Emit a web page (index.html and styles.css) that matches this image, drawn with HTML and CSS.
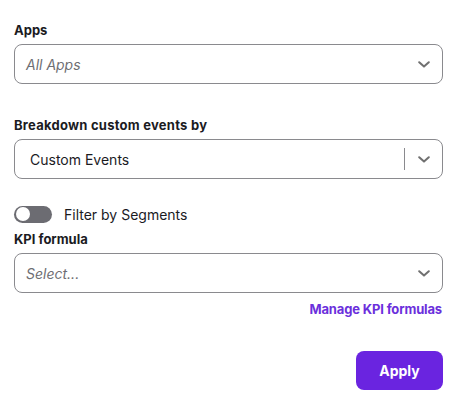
FILE: index.html
```html
<!DOCTYPE html>
<html lang="en">
<head>
<meta charset="utf-8">
<title>Filters</title>
<link rel="stylesheet" href="styles.css">
</head>
<body>
<div class="panel">
  <div class="field field-apps">
    <div class="label">Apps</div>
    <div class="select">
      <span class="placeholder">All Apps</span>
      <svg class="chev" width="12" height="7" viewBox="0 0 12 7"><path d="M1.2 1.2 L6 5.6 L10.8 1.2" fill="none" stroke="#707070" stroke-width="2" stroke-linecap="round" stroke-linejoin="round"/></svg>
    </div>
  </div>

  <div class="field field-breakdown">
    <div class="label label-wide">Breakdown custom events by</div>
    <div class="select select-value">
      <span class="value">Custom Events</span>
      <span class="sep"></span>
      <svg class="chev" width="12" height="7" viewBox="0 0 12 7"><path d="M1.2 1.2 L6 5.6 L10.8 1.2" fill="none" stroke="#707070" stroke-width="2" stroke-linecap="round" stroke-linejoin="round"/></svg>
    </div>
  </div>

  <div class="toggle-row">
    <span class="toggle"><span class="knob"></span></span>
    <span class="toggle-text">Filter by Segments</span>
  </div>

  <div class="field field-kpi">
    <div class="label">KPI formula</div>
    <div class="select">
      <span class="placeholder">Select...</span>
      <svg class="chev" width="12" height="7" viewBox="0 0 12 7"><path d="M1.2 1.2 L6 5.6 L10.8 1.2" fill="none" stroke="#707070" stroke-width="2" stroke-linecap="round" stroke-linejoin="round"/></svg>
    </div>
  </div>

  <div class="link-row"><a class="manage" href="#">Manage KPI formulas</a></div>

  <div class="actions"><button class="apply">Apply</button></div>
</div>
</body>
</html>
```

FILE: styles.css
```css
html, body {
  margin: 0;
  padding: 0;
  background: #ffffff;
}
body {
  font-family: Inter, "Noto Sans", "Liberation Sans", sans-serif;
  color: #1b1b1f;
}
.panel {
  padding: 22px 13px 0 14px;
  display: flex;
  flex-direction: column;
}
.field {
  display: flex;
  flex-direction: column;
  gap: 6px;
}
.label {
  font-size: 13px;
  line-height: 16px;
  font-weight: 700;
  color: #1b1b1f;
}
.label-wide {
  letter-spacing: 0.25px;
}
.select {
  box-sizing: border-box;
  height: 40px;
  border: 1px solid #8a8a8e;
  border-radius: 8px;
  display: flex;
  align-items: center;
  padding: 0 12px 0 11px;
}
.placeholder {
  flex: 1;
  font-size: 14px;
  font-style: italic;
  color: #6e6e73;
}
.value {
  flex: 1;
  font-size: 14px;
  color: #1b1b1f;
  padding-left: 4px;
}
.sep {
  width: 1px;
  height: 22px;
  background: #8a8a8e;
  margin-right: 13px;
}
.chev {
  display: block;
  flex: none;
}
.field-breakdown {
  margin-top: 33px;
}
.toggle-row {
  margin-top: 26px;
  display: flex;
  align-items: center;
  gap: 12px;
  height: 18px;
}
.toggle {
  position: relative;
  width: 38px;
  height: 17px;
  border-radius: 9px;
  background: #6c6c72;
}
.knob {
  position: absolute;
  left: 2px;
  top: 1.5px;
  width: 14px;
  height: 14px;
  border-radius: 50%;
  background: #ffffff;
}
.toggle-text {
  font-size: 14px;
  color: #1b1b1f;
}
.field-kpi {
  margin-top: 8px;
}
.link-row {
  display: flex;
  justify-content: flex-end;
  margin-top: 8px;
  padding-right: 1px;
}
.manage {
  font-size: 13px;
  line-height: 16px;
  font-weight: 700;
  letter-spacing: -0.15px;
  color: #6b2fdc;
  text-decoration: none;
}
.actions {
  display: flex;
  justify-content: flex-end;
  margin-top: 34px;
}
.apply {
  width: 87px;
  height: 39px;
  border: none;
  border-radius: 8px;
  background: #6a24e0;
  color: #ffffff;
  font-family: inherit;
  font-size: 14px;
  font-weight: 700;
}
```
